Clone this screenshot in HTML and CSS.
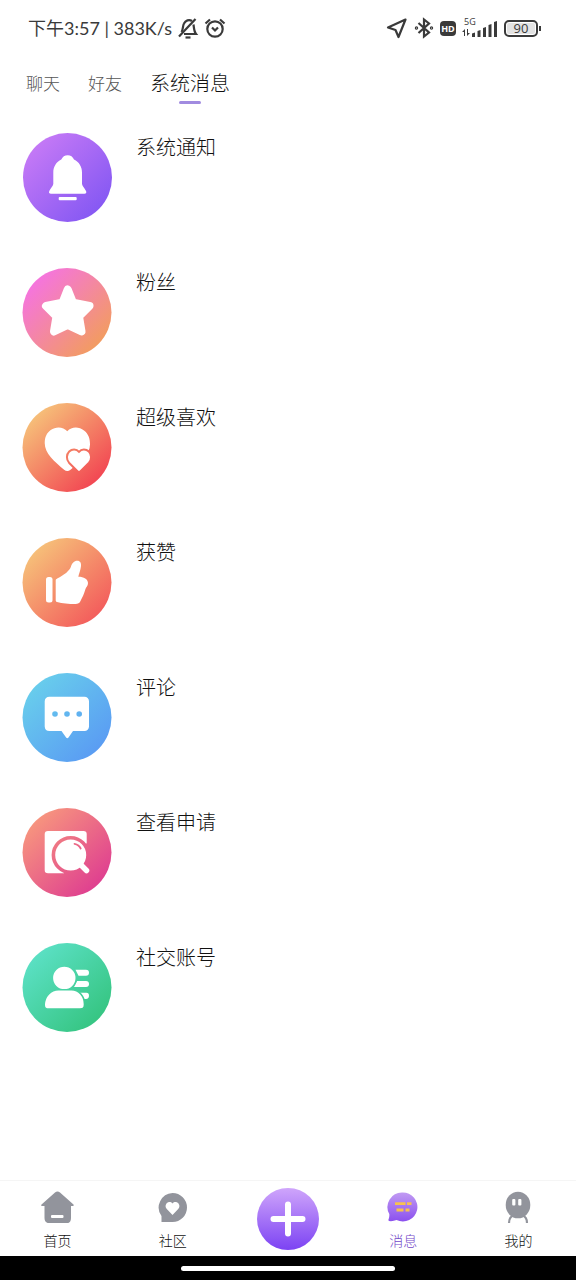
FILE: index.html
```html
<!DOCTYPE html>
<html lang="zh-CN">
<head>
<meta charset="utf-8">
<meta name="viewport" content="width=device-width, initial-scale=1">
<title>系统消息</title>
<link rel="stylesheet" href="styles.css">
</head>
<body>
<div class="app">
  <header class="status">
    <div class="status-left">
      <span class="status-time">下午3:57 | 383K/s</span>
      <svg width="22" height="22" viewBox="0 0 22 22" fill="none" stroke="#3a3a3a" stroke-width="2.200">
        <path d="M2 19.500 18.500 2"/><path d="M4.500 15C6.500 12 5.500 9 7 6.500 8.500 3.500 12 2 15 4"/><path d="M16.500 7.500C17 11 17 14.500 19 17H7"/><path d="M8.500 20.500h5"/>
      </svg>
      <svg width="22" height="22" viewBox="0 0 22 22" fill="none" stroke="#3a3a3a" stroke-width="2.200">
        <circle cx="11" cy="12" r="7.700"/><path d="M1.500 6.500 6 2.500M20.500 6.500 16 2.500"/><path d="M8 10.500l3 3 3-3"/>
      </svg>
    </div>
    <div class="status-right">
      <svg width="22" height="22" viewBox="0 0 22 22" fill="none" stroke="#3a3a3a" stroke-width="2.200" stroke-linejoin="round"><path d="M19.500 2.500 2 10.500l7.500 2.500 3 7z"/></svg>
      <svg width="20" height="22" viewBox="0 0 20 22" fill="none" stroke="#3a3a3a" stroke-width="2.200"><path d="M4.500 6 15 15.500 10 19.500V2.500l5 4L4.500 16"/><circle cx="2.500" cy="11" r=".6"/><circle cx="17.500" cy="11" r=".6"/></svg>
      <span class="hd">HD</span>
      <span class="signal">
        <span class="signal-name">5G</span>
        <svg width="36" height="20" viewBox="0 0 36 20" fill="#3a3a3a"><path d="M0 14 3 11v7H2v-4zM5 11h1v4h2l-3 3zM10 15.500l3-1V19h-3zM15.500 13l3-1v7h-3zM21 10l3-1v10h-3zM26.500 7l3-1v13h-3zM32 4l3-1v16h-3z"/></svg>
      </span>
      <span class="battery"><span class="battery-body">90</span><span class="battery-tip"></span></span>
    </div>
  </header>

  <nav class="tabs" aria-label="消息分类">
    <button class="tab" type="button">聊天</button>
    <button class="tab" type="button">好友</button>
    <button class="tab tab-active" type="button" aria-current="true">系统消息</button>
  </nav>

  <main class="list">
    <a class="item" href="#notice">
      <svg class="item-icon" viewBox="0 0 90 90">
        <defs><linearGradient id="g1" gradientUnits="userSpaceOnUse" x1="12" y1="12" x2="78" y2="78"><stop stop-color="#c579f6"/><stop offset="1" stop-color="#8558f3"/></linearGradient></defs>
        <circle cx="45.500" cy="44.500" r="44.500" fill="url(#g1)"/>
        <path fill="#fff" d="M45.700 22.300c3 0 5 1.500 6.300 4.200 5 2.300 8 7.200 8 13v11.500c.5 2.500 2.500 4 4 7 .8 1.600 0 2.700-1.500 2.700H29c-1.700 0-2.500-1-1.700-2.700 1.400-3 3.500-4.500 4-7V39.500c0-5.800 3-10.700 8-13 1.300-2.700 3.400-4.200 6.400-4.200z"/>
        <rect x="36.700" y="64" width="18" height="3.200" rx="1" fill="#fff"/>
      </svg>
      <span class="item-title">系统通知</span>
    </a>
    <a class="item" href="#fans">
      <svg class="item-icon" viewBox="0 0 90 90">
        <defs><linearGradient id="g2" gradientUnits="userSpaceOnUse" x1="12" y1="16" x2="76" y2="78"><stop stop-color="#f575dc"/><stop offset="1" stop-color="#f29c60"/></linearGradient></defs>
        <circle cx="45" cy="44.500" r="44.500" fill="url(#g2)"/>
        <path fill="#fff" stroke="#fff" stroke-width="8" stroke-linejoin="round" d="M45.700 21.500 51 34.800 67.500 38 57 48.500 59.500 63.500 45.700 57 32 63.500 34.500 48.500 24 38 40.500 34.800z"/>
      </svg>
      <span class="item-title">粉丝</span>
    </a>
    <a class="item" href="#superlike">
      <svg class="item-icon" viewBox="0 0 90 90">
        <defs><linearGradient id="g3" gradientUnits="userSpaceOnUse" x1="12" y1="12" x2="74" y2="78"><stop stop-color="#f6c079"/><stop offset="1" stop-color="#f24853"/></linearGradient></defs>
        <circle cx="45" cy="44.500" r="44.500" fill="url(#g3)"/>
        <path fill="#fff" d="M45.300 28.300C49.500 23.500 57 23.500 62 27.500c4.500 3.500 6 8 6 14 0 10-11 18-19.500 25.300-2 1.600-4.400 1.600-6.400 0C32.500 58.500 22.700 50.500 22.700 40c0-6 2-10 6-13 5.300-3.800 12.600-3.400 16.600 1.300z"/>
        <path fill="#fff" stroke="url(#g3)" stroke-width="2" d="M57 48.800c2.500-3 7-3 9.800-.3 3 3 3 8 .2 11.200L58.500 68.200c-1 1-2 1-3 0L47 59.700c-2.800-3.200-2.800-8.200.2-11.200 2.800-2.700 7.300-2.700 9.800.3z"/>
      </svg>
      <span class="item-title">超级喜欢</span>
    </a>
    <a class="item" href="#likes">
      <svg class="item-icon" viewBox="0 0 90 90">
        <defs><linearGradient id="g4" gradientUnits="userSpaceOnUse" x1="12" y1="12" x2="76" y2="78"><stop stop-color="#f6c079"/><stop offset="1" stop-color="#f35d5c"/></linearGradient></defs>
        <circle cx="45" cy="44.500" r="44.500" fill="url(#g4)"/>
        <rect x="24" y="39" width="6.500" height="25.500" rx="2.500" fill="#fff"/>
        <path fill="#fff" d="M33.700 42.500c0-1 .6-1.500 1.500-2C42 37 47.500 33 49 28.500c1-3.300 3-5.800 6.300-5.800 3 0 4 2.300 3.700 5.300-.4 4-2 7.500-2.700 10.700 5.500 0 9.700 2.300 9.700 6.300 0 3-2 4-2.700 6.500-1.300 4.500-3 8-4.800 11.500-1 2.300-2.500 3-5 3-7 0-13-.6-18.500-2-1-.3-1.300-.8-1.300-2z"/>
      </svg>
      <span class="item-title">获赞</span>
    </a>
    <a class="item" href="#comments">
      <svg class="item-icon" viewBox="0 0 90 90">
        <defs><linearGradient id="g5" gradientUnits="userSpaceOnUse" x1="12" y1="12" x2="76" y2="78"><stop stop-color="#68cdec"/><stop offset="1" stop-color="#5a9cf3"/></linearGradient></defs>
        <circle cx="45" cy="44.500" r="44.500" fill="url(#g5)"/>
        <path fill="#fff" d="M27.500 23.700h35a4.500 4.500 0 0 1 4.500 4.500v25.300a4.500 4.500 0 0 1-4.500 4.500H51l-4.500 6.500q-1.200 1.500-2.400 0L39.500 58h-12a4.800 4.800 0 0 1-4.800-4.500V28.200a4.800 4.800 0 0 1 4.800-4.500z"/>
        <g fill="url(#g5)"><circle cx="33" cy="41" r="2.800"/><circle cx="45" cy="41" r="2.800"/><circle cx="57.200" cy="41" r="2.800"/></g>
      </svg>
      <span class="item-title">评论</span>
    </a>
    <a class="item" href="#requests">
      <svg class="item-icon" viewBox="0 0 90 90">
        <defs><linearGradient id="g6" gradientUnits="userSpaceOnUse" x1="12" y1="12" x2="76" y2="78"><stop stop-color="#f7957e"/><stop offset="1" stop-color="#df3f90"/></linearGradient></defs>
        <circle cx="45" cy="44.500" r="44.500" fill="url(#g6)"/>
        <path fill="#fff" d="M26 23h35.500q3.200 0 3.200 3v9L42 65.300H26q-3.300 0-3.300-3.300V26q0-3 3.300-3z"/>
        <circle cx="48.700" cy="47" r="17.300" fill="#fff" stroke="url(#g6)" stroke-width="3.600"/>
        <path d="M58 56l6.500 6.500" stroke="#fff" stroke-width="5.500" stroke-linecap="round"/>
        <path d="M52.500 35.800q4.500 1 6.200 4.700" stroke="url(#g6)" stroke-width="1.800" fill="none" stroke-linecap="round"/>
      </svg>
      <span class="item-title">查看申请</span>
    </a>
    <a class="item" href="#accounts">
      <svg class="item-icon" viewBox="0 0 90 90">
        <defs><linearGradient id="g7" gradientUnits="userSpaceOnUse" x1="12" y1="12" x2="76" y2="78"><stop stop-color="#5be0c4"/><stop offset="1" stop-color="#36c582"/></linearGradient></defs>
        <circle cx="45" cy="44.500" r="44.500" fill="url(#g7)"/>
        <g fill="#fff"><path d="M53.500 26.700H64a3 3 0 0 1 0 6h-7.500z"/><path d="M55 38h9a3 3 0 0 1 0 6H52z"/><path d="M58 49.700h6.500q2.500 0 2.500 3 0 3-3 3.300h-1.500z"/></g>
        <circle cx="42.300" cy="35" r="12" fill="#fff" stroke="url(#g7)" stroke-width="1.600"/>
        <path fill="#fff" stroke="url(#g7)" stroke-width="1.600" d="M36.500 46.800h13c7.500 0 13 6.500 13 14.500 0 3.500-1 4.800-4.500 4.800H27c-3.700 0-5-1.300-4.800-4.800.6-8.500 6.500-14.500 14.300-14.500z"/>
      </svg>
      <span class="item-title">社交账号</span>
    </a>
  </main>

  <nav class="bottom" aria-label="主导航">
    <a class="nav" href="#home">
      <svg width="34" height="32" viewBox="0 0 34 32"><path fill="#92949c" d="M14 1.500q2.500-1.800 5 0L32.500 13.500q.8 1.200-.7 1.500H30v12q0 5.500-5.500 5.500H9Q3.500 32 3.500 27V15H1Q-.5 14.700.5 13.500z"/><rect x="10" y="24" width="12.500" height="3" rx="1" fill="#fff"/></svg>
      <span>首页</span>
    </a>
    <a class="nav" href="#community">
      <svg width="32" height="32" viewBox="0 0 32 32"><path fill="#92949c" d="M15.500 2a14.500 14.500 0 1 1 0 29H4.500V25A14.500 14.500 0 0 1 15.500 2z"/><path fill="#fff" d="M15.500 12.500c2-2.200 4.500-1.500 6 0 1.400 1.800 1.200 4-.3 5.500l-5.700 6L9.800 18c-1.500-1.500-1.700-3.700-.3-5.500 1.500-1.500 4-2.200 6 0z"/></svg>
      <span>社区</span>
    </a>
    <button class="add" type="button" aria-label="发布">
      <svg width="36" height="36" viewBox="0 0 36 36" stroke="#fff" stroke-width="6" stroke-linecap="round"><path d="M18 3.500v29M3.500 18h29"/></svg>
    </button>
    <a class="nav nav-active" href="#messages" aria-current="page">
      <svg width="32" height="32" viewBox="0 0 32 32"><defs><linearGradient id="g8" x1="0" y1="0" x2="0" y2="1"><stop stop-color="#c19bf3"/><stop offset="1" stop-color="#8b50ee"/></linearGradient></defs><path fill="url(#g8)" d="M15.500 1.500a14.500 14.500 0 1 1-6 27.500Q6 30.500 2 30q-1-.8-.3-2 .8-2 .6-5A14.500 14.500 0 0 1 15.500 1.500z"/><path d="M8 12.700h10.500M20 12.700h4.500M9.500 19h7M18.500 19h4" stroke="#f7c14f" stroke-width="2.800"/></svg>
      <span>消息</span>
    </a>
    <a class="nav" href="#mine">
      <svg width="32" height="32" viewBox="0 0 32 32"><path d="M11.500 24.500Q7 26 7 32M20.500 24.500Q25 26 25 32" fill="none" stroke="#92949c" stroke-width="2.200"/><ellipse cx="16" cy="14" rx="12.300" ry="13.300" fill="#92949c"/><rect x="10.200" y="8" width="3.200" height="6.500" rx="1" fill="#fff"/><rect x="16.200" y="8" width="3.200" height="6.500" rx="1" fill="#fff"/></svg>
      <span>我的</span>
    </a>
  </nav>
  <div class="gesture"><span class="gesture-bar"></span></div>
</div>
</body>
</html>
```
FILE: styles.css
```css
* { box-sizing: border-box; }

body {
  margin: 0;
  background: #fff;
  color: #111;
  font-family: "Noto Sans CJK SC Light", "Noto Sans CJK SC", sans-serif;
  font-weight: 300;
}

a { color: inherit; text-decoration: none; }

button {
  border: 0;
  padding: 0;
  background: none;
  color: inherit;
  font: inherit;
  cursor: pointer;
}

svg { display: block; flex: none; }

.app {
  display: flex;
  flex-direction: column;
  min-height: 100vh;
}

.status {
  display: flex;
  justify-content: space-between;
  align-items: center;
  height: 56px;
  padding: 0 35px 0 28px;
  color: #3a3a3a;
}

.status-left {
  display: flex;
  align-items: center;
  gap: 5px;
}

.status-time {
  font-family: Lato, "Noto Sans CJK SC", sans-serif;
  font-size: 18px;
  line-height: 24px;
  font-weight: 400;
  white-space: nowrap;
}

.status-right {
  display: flex;
  align-items: center;
  gap: 6px;
}

.hd {
  width: 16px;
  border-radius: 4px;
  background: #3a3a3a;
  color: #fff;
  font: 700 9px/15px "Open Sans", sans-serif;
  text-align: center;
}

.signal {
  display: grid;
  align-items: end;
}

.signal > * { grid-area: 1 / 1; }

.signal-name {
  align-self: start;
  padding-left: 2px;
  font: 400 9px/8px "Open Sans", sans-serif;
}

.battery {
  display: flex;
  align-items: center;
  gap: 1px;
}

.battery-body {
  width: 34px;
  border: 2px solid #3a3a3a;
  border-radius: 5px;
  background: #e3e3e3;
  box-shadow: inset 0 0 0 1px #fff;
  font: 400 13px/13px "Open Sans", sans-serif;
  text-align: center;
}

.battery-tip {
  width: 2px;
  height: 5px;
  background: #3a3a3a;
}

.tabs {
  display: flex;
  align-items: flex-start;
  gap: 28px;
  padding: 13px 26px 0;
}

.tab {
  padding-top: 1px;
  color: #555;
  font-size: 17px;
  line-height: 26px;
}

.tab-active {
  display: flex;
  flex-direction: column;
  align-items: center;
  gap: 4px;
  padding-top: 0;
  color: #111;
  font-size: 20px;
  line-height: 28px;
}

.tab-active::after {
  content: "";
  width: 22px;
  height: 3px;
  border-radius: 2px;
  background: #a18be0;
}

.list {
  display: flex;
  flex: 1;
  flex-direction: column;
  gap: 45px;
  padding: 29px 22px;
}

.item {
  display: flex;
  align-items: flex-start;
  gap: 24px;
}

.item-icon {
  width: 90px;
  height: 90px;
}

.item-title {
  font-size: 20px;
  line-height: 28px;
}

.bottom {
  display: grid;
  grid-template-columns: repeat(5, 1fr);
  border-top: 1px solid #f5f5f5;
  padding: 7px 0 5px;
}

.nav {
  display: flex;
  flex-direction: column;
  align-items: center;
  gap: 7px;
  padding-top: 3px;
  font-size: 14px;
  line-height: 20px;
}

.nav-active { color: #7347c9; }

.add {
  display: grid;
  place-items: center;
  justify-self: center;
  width: 62px;
  height: 62px;
  margin-bottom: 1px;
  border-radius: 50%;
  background: linear-gradient(#cfa5fb, #7c43f3);
}

.gesture {
  display: flex;
  justify-content: center;
  align-items: center;
  height: 24px;
  background: #000;
}

.gesture-bar {
  width: 37%;
  height: 5px;
  border-radius: 3px;
  background: #fff;
}
```
